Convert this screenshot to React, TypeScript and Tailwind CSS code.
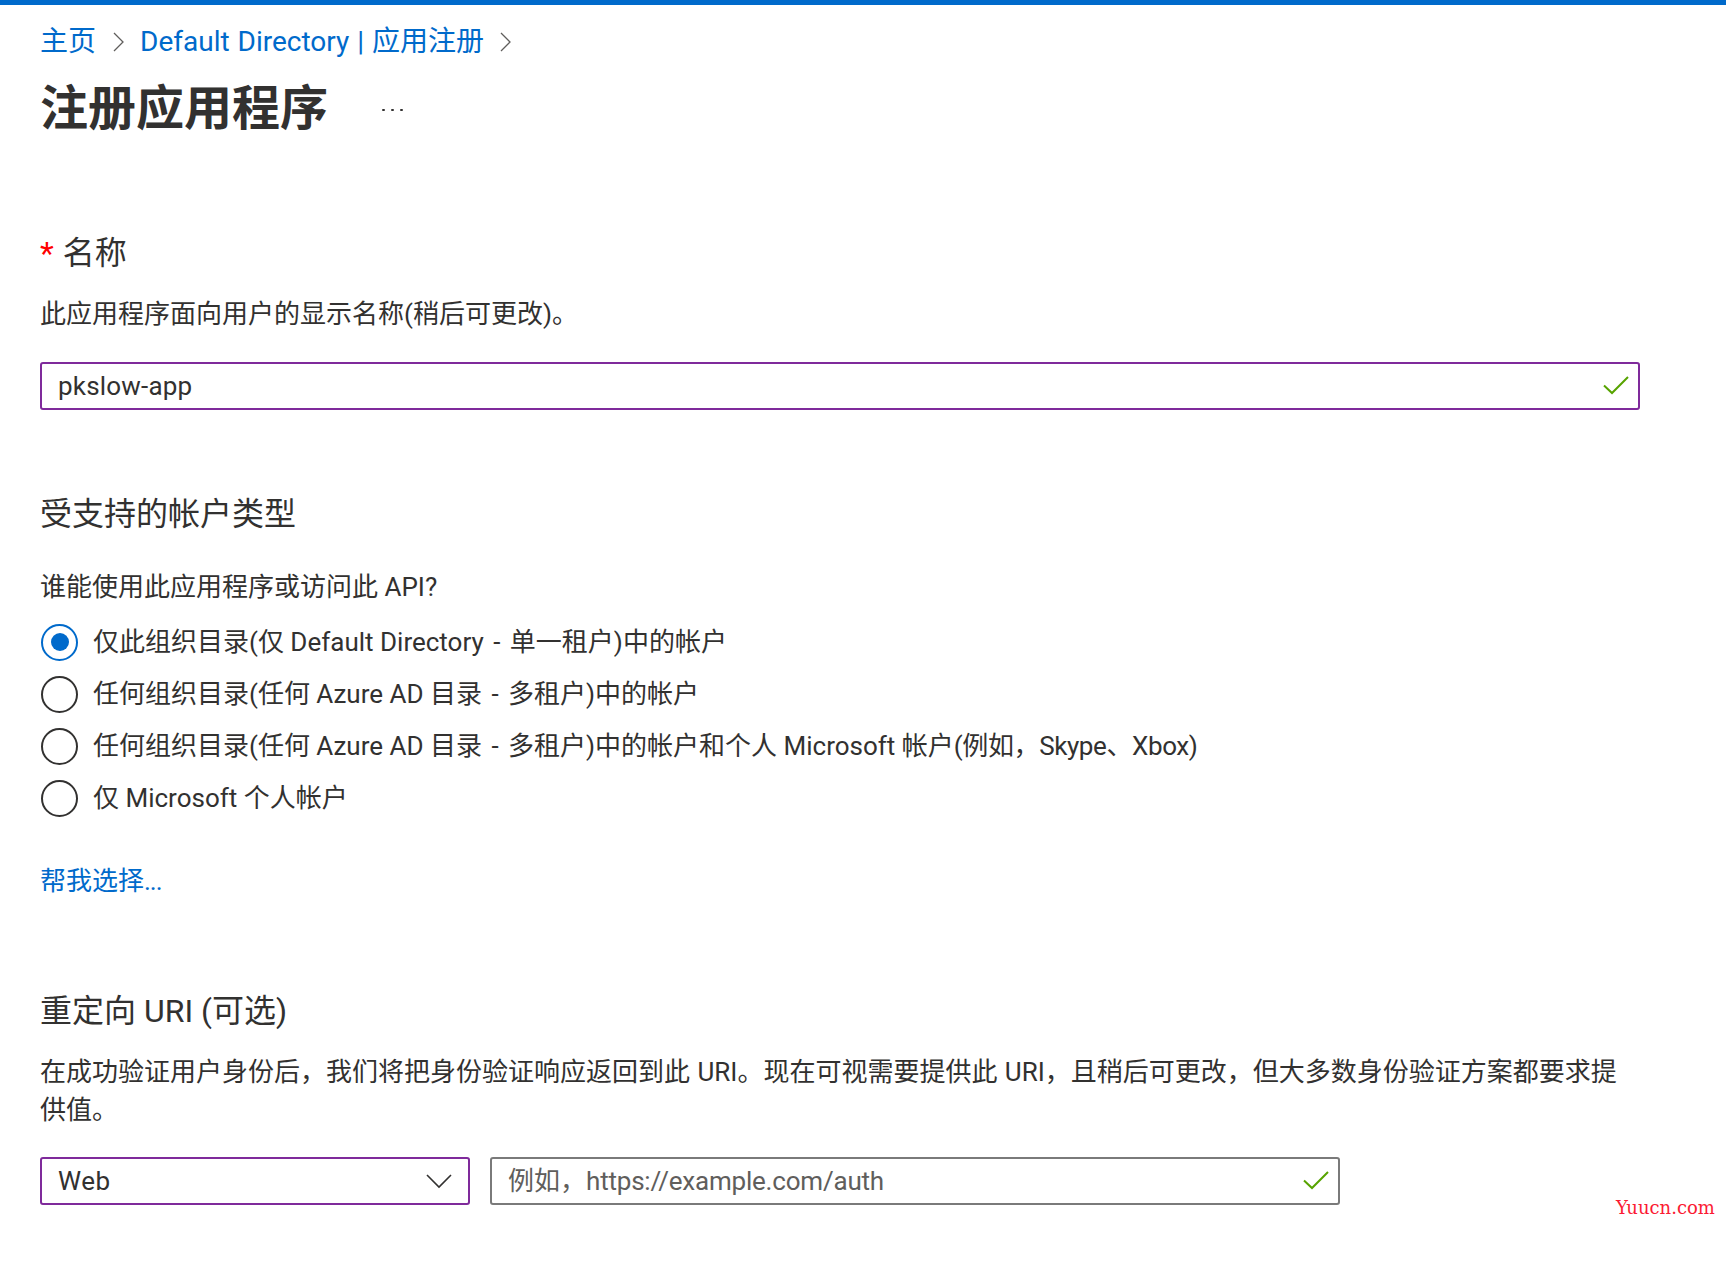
import type { ReactNode } from "react";

const FONT = "font-['Roboto','Noto_Sans_CJK_SC',sans-serif]";

function Chevron() {
  return (
    <svg width="11" height="20" viewBox="0 0 11 20" fill="none" className="shrink-0">
      <path d="M1 1l9 9-9 9" stroke="#605e5c" strokeWidth="1.3" />
    </svg>
  );
}

function Check() {
  return (
    <svg width="26" height="20" viewBox="0 0 26 20" fill="none" className="shrink-0">
      <path d="M1 9.5l8 7.5L25 1" stroke="#57a300" strokeWidth="2" />
    </svg>
  );
}

function Dash() {
  return <span className="mx-[3px]">-</span>;
}

function Radio({ children, checked }: { children: ReactNode; checked?: boolean }) {
  return (
    <div className="flex h-[52px] items-center gap-[15px] pl-px">
      <div
        className={
          checked
            ? "flex h-[37px] w-[37px] items-center justify-center rounded-full border-2 border-[#006acb]"
            : "flex h-[37px] w-[37px] items-center justify-center rounded-full border-2 border-[#323130]"
        }
      >
        {checked && <div className="h-[18px] w-[18px] rounded-full bg-[#006acb]"></div>}
      </div>
      <span>{children}</span>
    </div>
  );
}

export default function App() {
  return (
    <div className={`${FONT} relative h-[1264px] w-[1726px] overflow-hidden bg-white text-[26px] leading-[38px] text-[#323130]`}>
      <div className="h-[5px] bg-[#006acb]"></div>

      <div className="pl-[40px]">
        {/* Breadcrumb */}
        <div className="flex h-[74px] items-center text-[28px] text-[#006acb]">
          <span>主页</span>
          <div className="ml-[17px] mr-[16px]">
            <Chevron />
          </div>
          <span className="[word-spacing:1px]">Default Directory | 应用注册</span>
          <div className="ml-[16px]">
            <Chevron />
          </div>
        </div>

        {/* Title */}
        <div className="flex h-[60px] items-center">
          <h1 className="text-[48px] font-bold leading-[60px]">注册应用程序</h1>
          <div className="ml-[54px] flex gap-[6.5px] pt-[2px]">
            <div className="h-[2.5px] w-[2.5px] rounded-full bg-[#323130]"></div>
            <div className="h-[2.5px] w-[2.5px] rounded-full bg-[#323130]"></div>
            <div className="h-[2.5px] w-[2.5px] rounded-full bg-[#323130]"></div>
          </div>
        </div>

        {/* Name */}
        <div className="mt-[92px] flex items-center text-[32px] leading-[44px]">
          <span className="mr-[9px] text-[#ff0000]">*</span>
          <span>名称</span>
        </div>
        <p className="mt-[20px]">此应用程序面向用户的显示名称(稍后可更改)。</p>
        <div className="mt-[29px] flex h-[48px] w-[1600px] items-center justify-between rounded-[3px] border-2 border-[#7f2a9b] pl-[16px] pr-[9px]">
          <span className="tracking-[0.2px]">pkslow-app</span>
          <Check />
        </div>

        {/* Account types */}
        <h2 className="mt-[82px] text-[32px] font-normal leading-[44px]">受支持的帐户类型</h2>
        <p className="mt-[32px]">谁能使用此应用程序或访问此 API?</p>
        <div className="mt-[10px]">
          <Radio checked>
            仅此组织目录(仅 Default Directory <Dash /> 单一租户)中的帐户
          </Radio>
          <Radio>
            任何组织目录(任何 Azure AD 目录 <Dash /> 多租户)中的帐户
          </Radio>
          <Radio>
            任何组织目录(任何 Azure AD 目录 <Dash /> 多租户)中的帐户和个人 Microsoft 帐户
            <span className="tracking-[-0.4px]">(例如，Skype、Xbox)</span>
          </Radio>
          <Radio>仅 Microsoft 个人帐户</Radio>
        </div>
        <p className="mt-[38px] text-[#006acb]">
          帮我选择<span className="tracking-[-1px]">...</span>
        </p>

        {/* Redirect URI */}
        <h2 className="mt-[89px] text-[32px] font-normal leading-[44px]">重定向 URI (可选)</h2>
        <p className="mt-[20px] w-[1600px] [word-spacing:1px]">
          在成功验证用户身份后，我们将把身份验证响应返回到此 URI。现在可视需要提供此 URI，且稍后可更改，但大多数身份验证方案都要求提供值。
        </p>
        <div className="mt-[28px] flex gap-[20px]">
          <div className="flex h-[48px] w-[430px] items-center justify-between rounded-[3px] border-2 border-[#7f2a9b] pl-[16px] pr-[16px]">
            <span className="tracking-[0.5px]">Web</span>
            <svg width="26" height="15" viewBox="0 0 26 15" fill="none">
              <path d="M1 1l12 12L25 1" stroke="#323130" strokeWidth="1.6" />
            </svg>
          </div>
          <div className="flex h-[48px] w-[850px] items-center justify-between rounded-[3px] border-2 border-[#7a7a7a] pl-[16px] pr-[9px] text-[#605e5c]">
            <span>
              例如，<span className="tracking-[-0.2px]">https://example.com/auth</span>
            </span>
            <Check />
          </div>
        </div>
      </div>

      {/* Watermark */}
      <div className="absolute left-[1616px] top-[1196px] font-['DejaVu_Serif',serif] text-[18px] leading-[24px] text-[#fb1a33]">
        Yuucn.com
      </div>
    </div>
  );
}
